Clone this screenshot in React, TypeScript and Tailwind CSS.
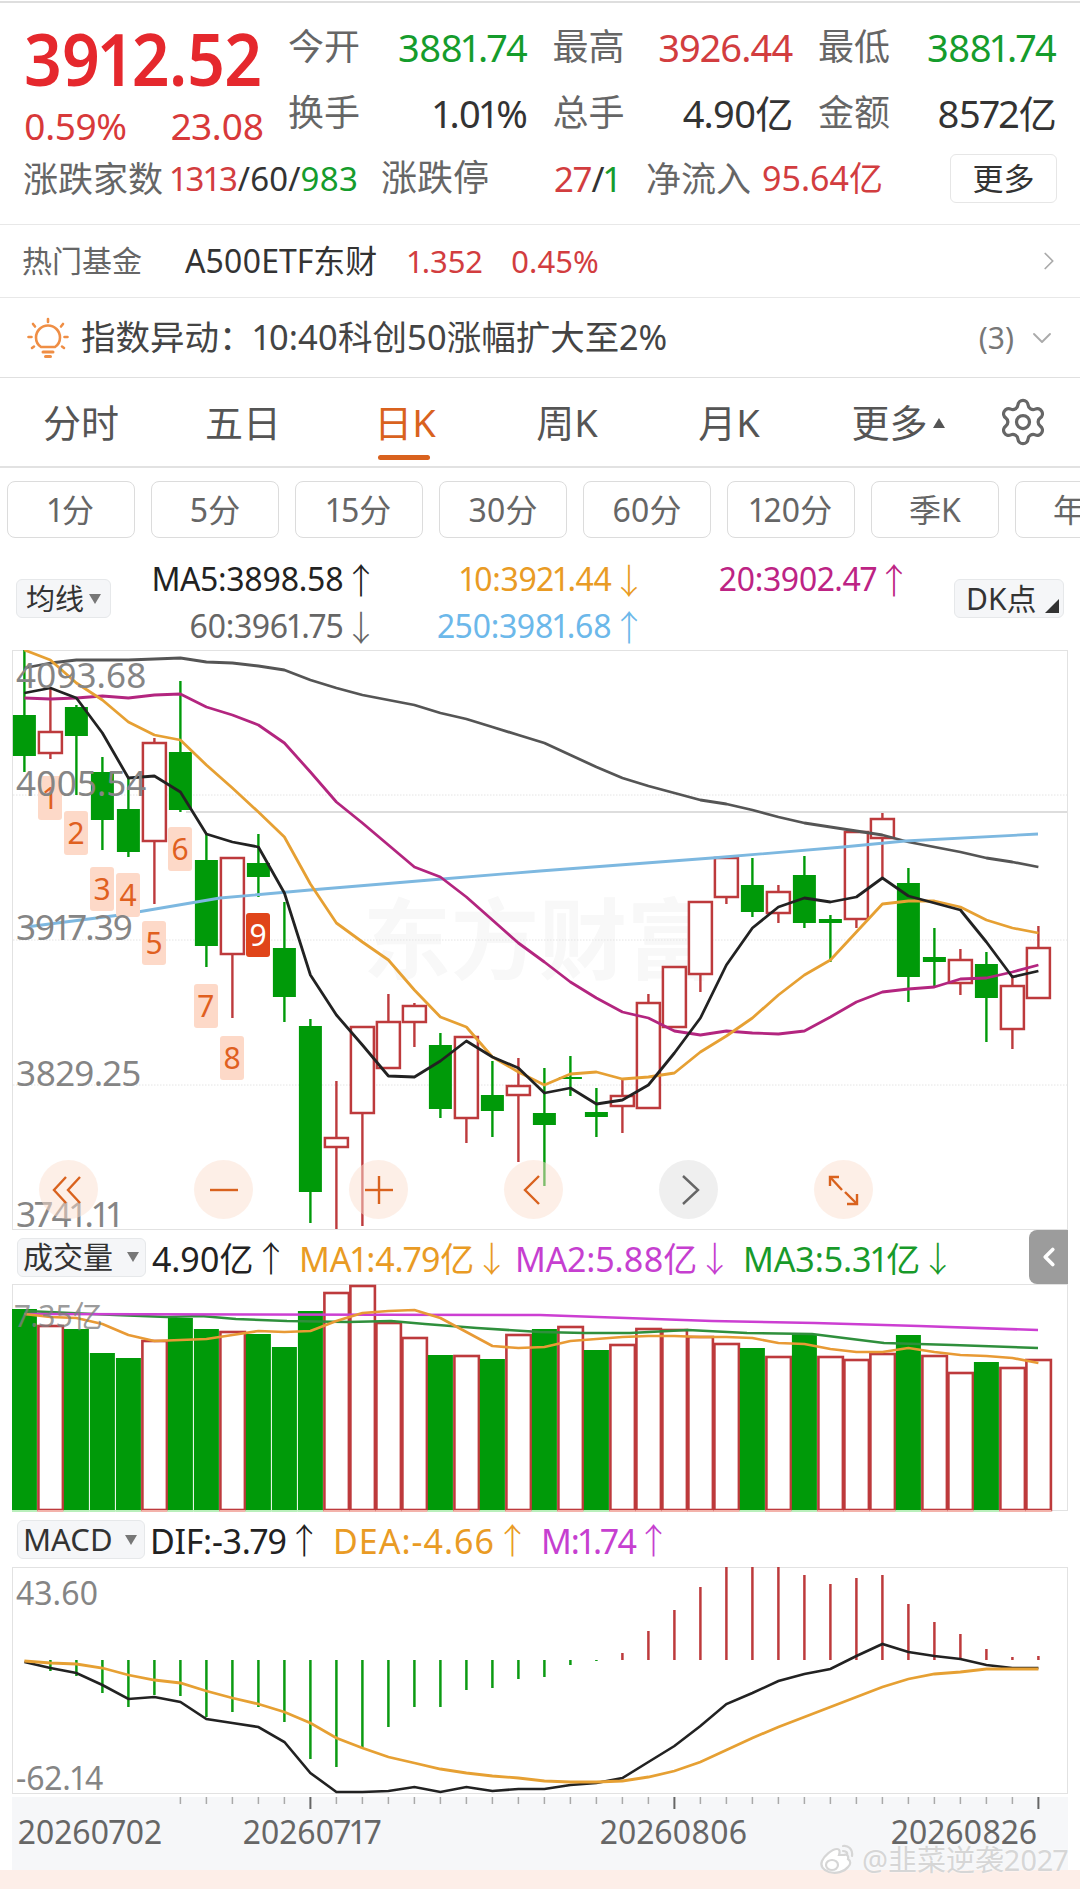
import React from 'react';
import { Settings, ChevronRight, ChevronDown, ChevronLeft } from 'lucide-react';

const X = (i: number) => 24.4 + 26 * i;
const pts = (ys: number[]) => ys.map((y, i) => `${X(i)},${y}`).join(' ');

type C = ['g' | 'r', number, number, number, number];
const candles: C[] = [
  ['g', 715, 756, 650, 772], ['r', 732, 753, 688, 759], ['g', 707, 736, 705, 795], ['g', 772, 820, 757, 850],
  ['g', 809, 852, 778, 857], ['r', 743, 841, 738, 904], ['g', 752, 810, 681, 812], ['g', 860, 946, 833, 967],
  ['r', 858, 954, 858, 1018], ['g', 863, 877, 834, 897], ['g', 948, 997, 902, 1022], ['g', 1026, 1192, 1019, 1223],
  ['r', 1138, 1147, 1081, 1229], ['r', 1027, 1113, 1027, 1226], ['r', 1022, 1068, 994, 1068], ['r', 1006, 1022, 1003, 1047],
  ['g', 1045, 1109, 1033, 1118], ['r', 1037, 1118, 1037, 1143], ['g', 1095, 1111, 1061, 1137], ['r', 1086, 1095, 1058, 1162],
  ['g', 1113, 1125, 1068, 1186], ['g', 1077, 1079, 1056, 1096], ['g', 1112, 1117, 1088, 1137], ['r', 1096, 1106, 1080, 1133],
  ['r', 1003, 1108, 994, 1108], ['r', 967, 1027, 966, 1027], ['r', 902, 974, 902, 992], ['r', 858, 897, 858, 904],
  ['g', 885, 912, 858, 917], ['r', 892, 913, 885, 923], ['g', 875, 923, 856, 928], ['g', 919, 923, 915, 962],
  ['r', 832, 919, 832, 928], ['r', 819, 838, 813, 878], ['g', 883, 977, 868, 1002], ['g', 957, 962, 928, 987],
  ['r', 960, 983, 949, 995], ['g', 964, 998, 952, 1042], ['r', 986, 1029, 975, 1049], ['r', 948, 998, 926, 998],
];
const ma5 = [693, 688, 698, 733, 778, 776, 792, 834, 842, 847, 893, 975, 1015, 1045, 1076, 1077, 1061, 1041, 1057, 1068, 1093, 1088, 1104, 1100, 1085, 1053, 1018, 965, 928, 907, 898, 902, 897, 878, 896, 903, 910, 942, 977, 971];
const ma10 = [650, 660, 683, 700, 722, 735, 740, 765, 788, 812, 837, 884, 923, 942, 960, 990, 1017, 1027, 1057, 1072, 1085, 1074, 1072, 1079, 1077, 1073, 1052, 1036, 1018, 995, 975, 960, 932, 904, 901, 901, 907, 920, 928, 933];
const ma20 = [698, 699, 698, 696, 698, 695, 694, 707, 715, 725, 743, 772, 802, 823, 845, 867, 877, 897, 920, 943, 962, 982, 998, 1012, 1018, 1031, 1035, 1031, 1033, 1034, 1031, 1017, 1002, 992, 989, 987, 979, 978, 972, 965];
const ma60 = [668, 663, 660, 660, 660, 659, 658, 662, 663, 666, 670, 680, 688, 695, 700, 705, 713, 719, 727, 735, 743, 755, 767, 778, 786, 793, 800, 804, 810, 817, 823, 827, 831, 835, 842, 847, 852, 858, 862, 867];
const ma250 = '26,927 120,915 220,898 310,890 430,880 540,871 712,858 843,847 905,841 1038,834';

const volTops = [1309, 1326, 1329, 1353, 1358, 1341, 1318, 1329, 1332, 1334, 1347, 1311, 1293, 1286, 1323, 1338, 1355, 1356, 1359, 1335, 1329, 1327, 1350, 1345, 1329, 1330, 1337, 1344, 1348, 1357, 1334, 1357, 1360, 1354, 1335, 1356, 1373, 1362, 1368, 1360];
const volO = [1314, 1317, 1318, 1324, 1335, 1341, 1340, 1339, 1335, 1331, 1332, 1331, 1321, 1313, 1311, 1310, 1318, 1332, 1346, 1348, 1347, 1341, 1339, 1337, 1336, 1336, 1337, 1337, 1338, 1343, 1344, 1349, 1352, 1352, 1348, 1352, 1355, 1356, 1358, 1363];
const volRed = new Set([1, 5, 8, 12, 13, 14, 15, 17, 19, 21, 23, 24, 25, 26, 27, 29, 31, 32, 33, 35, 36, 38, 39]);

const macdBars = [1660, 1671, 1676, 1693, 1707, 1695, 1696, 1717, 1712, 1707, 1722, 1759, 1767, 1747, 1727, 1707, 1707, 1690, 1688, 1679, 1677, 1665, 1661, 1653, 1631, 1610, 1587, 1567, 1567, 1567, 1575, 1584, 1578, 1575, 1604, 1622, 1634, 1649, 1657, 1656];
const dif = [1662, 1668, 1673, 1685, 1699, 1697, 1702, 1719, 1723, 1727, 1742, 1773, 1792, 1792, 1791, 1787, 1792, 1787, 1791, 1789, 1789, 1785, 1783, 1778, 1762, 1746, 1726, 1704, 1693, 1681, 1674, 1669, 1656, 1644, 1652, 1656, 1659, 1665, 1668, 1668];
const dea = [1661, 1663, 1664, 1668, 1675, 1680, 1683, 1691, 1698, 1704, 1712, 1723, 1738, 1748, 1757, 1763, 1769, 1773, 1776, 1778, 1781, 1782, 1782, 1781, 1777, 1771, 1762, 1750, 1738, 1727, 1717, 1707, 1697, 1687, 1679, 1674, 1672, 1669, 1669, 1669];

const marks: [string, number, number][] = [['1', 38, 776], ['2', 64, 811], ['3', 90, 867], ['4', 116, 873], ['5', 142, 921], ['6', 168, 827], ['7', 194, 984], ['8', 220, 1036], ['9', 246, 913]];

const GREEN = '#009a09';
const RED = '#bd3a3c';
const ORANGE = '#e6a033';

const Arrow = ({ d }: { d: 'u' | 'd' }) => (
  <span className="text-[35px] font-['Noto_Sans_CJK_SC',sans-serif] font-light">{d === 'u' ? '↑' : '↓'}</span>
);

const Tri = ({ className }: { className?: string }) => (
  <svg width="12" height="10" viewBox="0 0 12 10" className={className}>
    <path d="M0 0H12L6 10Z" fill="#777" />
  </svg>
);

const Circle = ({ children, gray }: { children: React.ReactNode; gray?: boolean }) => (
  <div className={`w-[59px] h-[59px] rounded-full ${gray ? 'bg-[#e8e8e8]/70' : 'bg-[#fbe0d0]/50'}`}>
    <svg width="59" height="59" viewBox="0 0 59 59" fill="none" stroke={gray ? '#666' : '#d9621e'} strokeWidth="2.4">
      {children}
    </svg>
  </div>
);

export default function App() {
  return (
    <div className="w-[1080px] h-[1889px] overflow-hidden bg-white font-['Noto_Sans','Noto_Sans_CJK_SC',sans-serif] proportional-nums text-[#666]">
      {/* Quote header */}
      <div className="h-[225px] border-b border-[#e8e8e8] flex flex-col">
        <div className="h-[3px] border-b-2 border-[#dedede]" />
        <div className="h-[150px] flex">
          <div className="w-[288px] pl-[24px] pr-[24px]">
            <div className="h-[70px] mt-[19px] flex items-center text-[66px] leading-none font-semibold text-[#e5282d] tracking-[-0.2px] scale-y-[1.1]">3912.52</div>
            <div className="h-[36px] mt-[15px] flex items-center justify-between text-[37px] tracking-[-0.4px] leading-none text-[#d8393a]">
              <span>0.59%</span>
              <span>23.08</span>
            </div>
          </div>
          <div className="pt-[11px] grid grid-cols-[239px_240px_238px] grid-rows-[66px_66px] gap-x-[25.5px] text-[36px] leading-none">
            {[
              ['今开', '3881.74', 'text-[#159c2c]'],
              ['最高', '3926.44', 'text-[#d23d3f]'],
              ['最低', '3881.74', 'text-[#159c2c]'],
              ['换手', '1.01%', 'text-[#333]'],
              ['总手', '4.90亿', 'text-[#333]'],
              ['金额', '8572亿', 'text-[#333]'],
            ].map(([a, b, c]) => (
              <div key={a} className="flex items-center justify-between">
                <span>{a}</span>
                <span className={`text-[38px] tracking-[-0.8px] ${c}`}>{b}</span>
              </div>
            ))}
          </div>
        </div>
        <div className="h-[50px] flex items-center pl-[23px] text-[35px] leading-none">
          <span className="w-[148px]">涨跌家数</span>
          <span className="w-[210px] text-[33px]">
            <span className="text-[#d23d3f]">1313</span>
            <span className="text-[#333]">/60/</span>
            <span className="text-[#159c2c]">983</span>
          </span>
          <div className="w-[239px] flex items-center justify-between">
            <span className="text-[36px]">涨跌停</span>
            <span className="text-[35px]">
              <span className="text-[#d23d3f]">27</span>
              <span className="text-[#333]">/</span>
              <span className="text-[#159c2c]">1</span>
            </span>
          </div>
          <span className="ml-[26px] w-[116px] text-[35px]">净流入</span>
          <span className="text-[#d23d3f] text-[34px]">95.64亿</span>
          <div className="ml-auto mr-[23px] w-[107px] h-[49px] flex items-center justify-center rounded-[6px] border border-[#e6e6e6] text-[31px] text-[#333]">更多</div>
        </div>
      </div>

      {/* Hot fund */}
      <div className="h-[73px] border-b border-[#e8e8e8] flex items-center pl-[22px] pr-[16px] text-[31px] leading-none">
        <span className="w-[163px] text-[30px]">热门基金</span>
        <span className="w-[223px] text-[32px] text-[#333]">A500ETF东财</span>
        <span className="w-[103px] text-[#d23d3f]">1.352</span>
        <span className="text-[#d23d3f]">0.45%</span>
        <ChevronRight className="ml-auto text-[#aaa]" size={30} strokeWidth={1.4} />
      </div>

      {/* Alert */}
      <div className="h-[80px] border-b border-[#e0e0e0] flex items-center pl-[27px] pr-[22px] text-[34.500px] leading-none text-[#444]">
        <svg width="42" height="42" viewBox="0 0 42 42" fill="none" stroke="#ef8e45" strokeWidth="2.600" strokeLinecap="round">
          <path d="M21 2v3M6 7l2 2.500M36 7l-2 2.500M1.500 20h3M37.500 20h3M5 31l2-1.500M37 31l-2-1.500" />
          <path d="M14 30c-3-2-5-5.500-5-9.500a12 12 0 0 1 24 0c0 4-2 7.500-5 9.500Z" />
          <path d="M16 35h10M18.500 39.500h5" strokeWidth="3" />
        </svg>
        <span className="ml-[12px]">指数异动：10:40科创50涨幅扩大至2%</span>
        <span className="ml-auto text-[30px] text-[#777]">(3)</span>
        <ChevronDown className="ml-[12px] text-[#aaa]" size={32} strokeWidth={1.4} />
      </div>

      {/* Tabs */}
      <div className="h-[90px] border-b-2 border-[#e2e2e2] flex items-stretch text-[38px] leading-none text-[#555]">
        {['分时', '五日', '日K', '周K', '月K'].map((t) => (
          <div key={t} className="w-[162px] flex flex-col items-center relative">
            <span className={`mt-[25px] ${t === '日K' ? 'text-[#d9621e]' : ''}`}>{t}</span>
            {t === '日K' && <div className="absolute top-[77px] left-[54px] w-[52px] h-[5px] rounded-full bg-[#d9621e]" />}
          </div>
        ))}
        <div className="w-[176px] flex items-start justify-center">
          <span className="mt-[25px]">更多</span>
          <svg width="12" height="10" viewBox="0 0 12 10" className="mt-[40px] ml-[5px]">
            <path d="M0 10H12L6 0Z" fill="#555" />
          </svg>
        </div>
        <Settings className="ml-[11px] mt-[18px]" size={52} strokeWidth={1.5} color="#666" />
      </div>

      {/* Periods */}
      <div className="h-[87px] pt-[13px] pl-[7px] flex gap-[16px] overflow-hidden text-[32px] leading-none text-[#666]">
        {['1分', '5分', '15分', '30分', '60分', '120分', '季K', '年K'].map((p) => (
          <div key={p} className="w-[128px] h-[57px] shrink-0 rounded-[8px] border border-[#dcdcdc] flex items-center justify-center">{p}</div>
        ))}
      </div>

      {/* MA row */}
      <div className="h-[95px] flex items-center relative">
        <div className="ml-[16px] w-[95px] h-[39px] mt-[-8px] flex items-center pl-[9px] rounded-[6px] border border-[#e6e8ea] bg-[#f5f6f8] text-[29px] leading-none text-[#333]">
          均线<Tri className="ml-[5px]" />
        </div>
        <div className="absolute left-[110px] top-0 grid grid-cols-[268px_268px_265px] grid-rows-[47px_47px] text-[32px] tracking-[-0.4px] leading-none">
          <div className="flex items-center justify-end text-[#222]">MA5:3898.58<Arrow d="u" /></div>
          <div className="flex items-center justify-end text-[#e99b24]">10:3921.44<Arrow d="d" /></div>
          <div className="flex items-center justify-end text-[#bd2384]">20:3902.47<Arrow d="u" /></div>
          <div className="flex items-center justify-end text-[#666]">60:3961.75<Arrow d="d" /></div>
          <div className="flex items-center justify-end text-[#6cb8ea]">250:3981.68<Arrow d="u" /></div>
        </div>
        <div className="ml-auto mr-[16px] w-[110px] h-[39px] mt-[-8px] flex items-center pl-[11px] rounded-[6px] border border-[#e6e8ea] bg-[#f5f6f8] text-[30px] leading-none text-[#333] relative">
          DK点
          <svg width="14" height="14" viewBox="0 0 14 14" className="absolute right-[4px] bottom-[4px]"><path d="M14 0V14H0Z" fill="#333" /></svg>
        </div>
      </div>

      {/* Main chart */}
      <div className="ml-[12px] w-[1056px] h-[580px] relative">
        <svg width="1056" height="580" viewBox="12 650 1056 580" className="block">
          <rect x="12.500" y="650.500" width="1055" height="579" fill="none" stroke="#e2e2e2" />
          <text x="539" y="972" textAnchor="middle" fontSize="88" fontWeight="700" fill="#f8f8f8">东方财富</text>
          {[795, 940, 1085].map((y) => (
            <line key={y} x1="13" x2="1067" y1={y} y2={y} stroke="#e4e4e4" strokeDasharray="1.500 1.500" />
          ))}
          <line x1="186" x2="1067" y1="812" y2="812" stroke="#d2d2d2" strokeWidth="1.500" />
          {candles.map(([c, t, b, h, l], i) => {
            const col = c === 'g' ? GREEN : RED;
            const x = X(i);
            return (
              <g key={i}>
                <line x1={x} x2={x} y1={h} y2={l} stroke={col} strokeWidth="2.400" />
                {c === 'g' ? (
                  <rect x={x - 11.500} y={t} width="23" height={b - t} fill={col} />
                ) : (
                  <rect x={x - 11.500} y={t} width="23" height={b - t} fill="#fff" stroke={col} strokeWidth="2.500" />
                )}
              </g>
            );
          })}
          <g fill="none" strokeWidth="2.800" strokeLinejoin="round">
            <polyline points={pts(ma60)} stroke="#555" />
            <polyline points={ma250} stroke="#7db8e0" />
            <polyline points={pts(ma20)} stroke="#b3257f" />
            <polyline points={pts(ma10)} stroke={ORANGE} />
            <polyline points={pts(ma5)} stroke="#222" />
          </g>
          {marks.map(([n, x, y]) => (
            <g key={n}>
              <rect x={x} y={y} width="24" height="44" rx="3" fill={n === '9' ? '#e0451a' : '#fdd9c8'} />
              <text x={x + 12} y={y + 33} textAnchor="middle" fontSize="30" fill={n === '9' ? '#fff' : '#e0601f'}>{n}</text>
            </g>
          ))}
          <g fontSize="35" fill="#858585">
            <text x="16" y="688">4093.68</text>
            <text x="16" y="796">4005.54</text>
            <text x="16" y="940" letterSpacing="-1">3917.39</text>
            <text x="16" y="1086" letterSpacing="-0.600">3829.25</text>
            <text x="16" y="1227" letterSpacing="-1.200">3741.11</text>
          </g>
        </svg>
        <div className="absolute left-[27px] top-[510px] flex gap-[96px]">
          <Circle><polyline points="27,17 15,30 27,43" /><polyline points="41,17 29,30 41,43" /></Circle>
          <Circle><line x1="16" x2="44" y1="30" y2="30" /></Circle>
          <Circle><line x1="16" x2="44" y1="30" y2="30" /><line x1="30" x2="30" y1="16" y2="44" /></Circle>
          <Circle><polyline points="35,16 21,30 35,44" /></Circle>
          <Circle gray><polyline points="24,16 39,30 24,44" /></Circle>
          <Circle>
            <line x1="16" y1="17" x2="28" y2="30" /><polyline points="16,26 16,17 25,17" />
            <line x1="43" y1="44" x2="31" y2="32" /><polyline points="43,34 43,44 33,44" />
          </Circle>
        </div>
      </div>

      {/* Volume header */}
      <div className="h-[54px] flex items-center text-[34px] tracking-[-0.1px] leading-none">
        <div className="ml-[17px] w-[129px] h-[39px] flex items-center pl-[5px] rounded-[6px] border border-[#e6e8ea] bg-[#f5f6f8] text-[30px] tracking-normal text-[#333]">
          成交量<Tri className="ml-[14px]" />
        </div>
        <span className="ml-[6px] w-[147px] text-[#222]">4.90亿<Arrow d="u" /></span>
        <span className="w-[216px] text-[#e99b24]">MA1:4.79亿<Arrow d="d" /></span>
        <span className="w-[228px] text-[#c63fd0]">MA2:5.88亿<Arrow d="d" /></span>
        <span className="text-[#189a2a]">MA3:5.31亿<Arrow d="d" /></span>
        <div className="ml-auto mr-[12px] self-stretch w-[39px] rounded-l-[8px] bg-[#9c9c9c] flex items-center justify-center">
          <ChevronLeft color="#fff" size={30} strokeWidth={3} />
        </div>
      </div>

      {/* Volume chart */}
      <div className="ml-[12px] w-[1056px] h-[228px]">
        <svg width="1056" height="228" viewBox="12 1284 1056 228" className="block">
          <rect x="12.500" y="1284.500" width="1055" height="226" fill="none" stroke="#e2e2e2" />
          {volTops.map((t, i) => {
            const x = X(i);
            const red = volRed.has(i);
            return red ? (
              <g key={i}>
                <rect x={x - 12} y={t} width="24.500" height={1510 - t} fill="#fff" stroke={RED} strokeWidth="2.600" />
                <rect x={x - 13} y="1510" width="26" height="2" fill="#f3b3ab" />
              </g>
            ) : (
              <g key={i}>
                <rect x={x - 12.500} y={t} width="25" height={1510 - t} fill={GREEN} />
                <rect x={x - 13} y="1510" width="26" height="2" fill="#b9efbb" />
              </g>
            );
          })}
          <g fill="none" strokeWidth="2.600" strokeLinejoin="round">
            <polyline points="26,1311 115,1315 167,1317 201,1316 236,1319 287,1321 348,1322 391,1321 425,1324 477,1328 540,1332 585,1333 630,1333 688,1330 747,1333 812,1334 884,1343 953,1345 1038,1348" stroke="#2f8f3c" />
            <polyline points="26,1314 540,1315 626,1318 712,1321 815,1323 919,1326 1038,1330" stroke="#cc3fd2" />
            <polyline points={pts(volO)} stroke="#e89a35" />
          </g>
          <text x="15" y="1327" fontSize="30" fill="#7f7f7f" fillOpacity="0.8">7.35亿</text>
        </svg>
      </div>

      {/* MACD header */}
      <div className="h-[55px] flex items-center text-[34px] tracking-[-0.3px] leading-none">
        <div className="ml-[17px] w-[128px] h-[39px] flex items-center pl-[5px] rounded-[6px] border border-[#e6e8ea] bg-[#f5f6f8] text-[31px] tracking-normal text-[#333]">
          MACD<Tri className="ml-[12px]" />
        </div>
        <span className="ml-[5px] w-[183px] text-[#222]">DIF:-3.79<Arrow d="u" /></span>
        <span className="w-[208px] text-[#e99b24] tracking-[1px]">DEA:-4.66<Arrow d="u" /></span>
        <span className="text-[#c63fd0] tracking-[-1px]">M:1.74<Arrow d="u" /></span>
      </div>

      {/* MACD chart */}
      <div className="ml-[12px] w-[1056px] h-[227px]">
        <svg width="1056" height="227" viewBox="12 1567 1056 227" className="block">
          <rect x="12.500" y="1567.500" width="1055" height="226" fill="none" stroke="#e2e2e2" />
          {macdBars.map((y, i) => (
            <line key={i} x1={X(i)} x2={X(i)} y1="1660" y2={y} stroke={i < 23 ? '#0b9a12' : RED} strokeWidth="2.500" />
          ))}
          <polyline points={pts(dif)} fill="none" stroke="#222" strokeWidth="2.600" />
          <polyline points={pts(dea)} fill="none" stroke={ORANGE} strokeWidth="2.800" />
          <g fontSize="32" fill="#858585">
            <text x="16" y="1605">43.60</text>
            <text x="16" y="1790">-62.14</text>
          </g>
        </svg>
      </div>

      {/* Date axis */}
      <div className="mt-[3px] ml-[12px] w-[1056px] h-[73px] bg-[#f6f7f9] relative">
        <svg width="1056" height="14" viewBox="12 1797 1056 14" className="block">
          {candles.map((_, i) =>
            i < 6 ? null : [11, 25, 39].includes(i) ? (
              <line key={i} x1={X(i)} x2={X(i)} y1="1797" y2="1809" stroke="#666" strokeWidth="2" />
            ) : (
              <line key={i} x1={X(i)} x2={X(i)} y1="1797" y2="1804" stroke="#aaa" strokeWidth="1.500" />
            ),
          )}
        </svg>
        <div className="flex text-[32px] leading-none text-[#666] pl-[6px] mt-[5px]">
          <span className="w-[225px]">20260702</span>
          <span className="w-[357px]">20260717</span>
          <span className="w-[291px]">20260806</span>
          <span>20260826</span>
        </div>
      </div>

      {/* Bottom strip */}
      <div className="h-[19px] bg-[#fdeee8] relative">
        <div className="absolute right-[12px] bottom-[13px] flex items-center text-[29px] leading-none text-[#d6d6d6] [text-shadow:0_0_2px_#fff]">
          <svg width="40" height="34" viewBox="0 0 40 34" fill="none" stroke="#d6d6d6" strokeWidth="2.200">
            <path d="M27 13c2-1 5 0 4 4 3 2 3 5 0 8-4 5-12 7-19 5-6-2-9-6-7-11 2-5 10-12 15-12 3 0 3 3 2 6 2 0 3 0 5 0Z" fill="#fff" />
            <ellipse cx="15" cy="23" rx="6" ry="5" />
            <path d="M26 4c5-1 10 3 9 10M26 9c2 0 5 1 4 4" strokeLinecap="round" />
          </svg>
          <span className="ml-[5px]">@韭菜逆袭2027</span>
        </div>
      </div>
    </div>
  );
}
